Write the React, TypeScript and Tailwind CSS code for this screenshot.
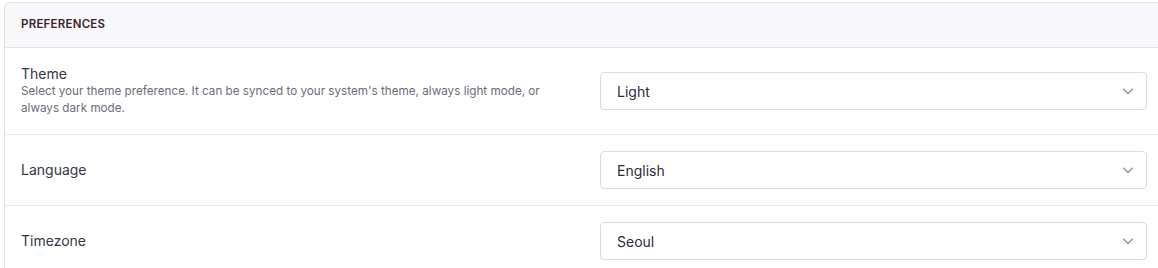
import React from "react";

const Chevron = () => (
  <svg width="12" height="12" viewBox="0 0 12 12" fill="none" className="text-[#8d8a9c]">
    <path d="M1.5 4l4.5 4.5L10.5 4" stroke="currentColor" strokeWidth="1.1" strokeLinecap="round" strokeLinejoin="round" />
  </svg>
);

const Select = ({ value }: { value: string }) => (
  <div className="flex h-[38px] items-center justify-between rounded-[4px] border border-[#dcdbe3] bg-white pl-4 pr-3 text-[14px] text-[#2f2c38]">
    <span>{value}</span>
    <Chevron />
  </div>
);

const rows = [
  {
    label: "Theme",
    desc: "Select your theme preference. It can be synced to your system's theme, always light mode, or always dark mode.",
    value: "Light",
  },
  { label: "Language", value: "English" },
  { label: "Timezone", value: "Seoul" },
];

export default function App() {
  return (
    <div className="w-full h-[268px] overflow-hidden bg-white pl-1 pt-[2px]" style={{ fontFamily: "Inter, 'Noto Sans', sans-serif" }}>
      <div className="w-[1159px] rounded-tl-md border-l border-t border-[#e3e2e8] bg-white">
        <div className="flex h-[45px] items-center border-b border-[#e3e2e8] bg-[#f8f8fb] px-4 rounded-tl-md">
          <span className="text-[11.5px] font-semibold uppercase tracking-[0.02em] text-[#3a2430]">Preferences</span>
        </div>
        {rows.map((r) => (
          <div
            key={r.label}
            className={`grid grid-cols-2 items-center gap-8 border-b border-[#ebeaef] px-4 ${r.desc ? "py-[17px]" : "py-4"}`}
          >
            <div>
              <div className="text-[14px] leading-[18px] text-[#3a3643]">{r.label}</div>
              {r.desc && <p className="text-[11.7px] leading-[17px] text-[#6e6b7b]">{r.desc}</p>}
            </div>
            <Select value={r.value} />
          </div>
        ))}
      </div>
    </div>
  );
}
